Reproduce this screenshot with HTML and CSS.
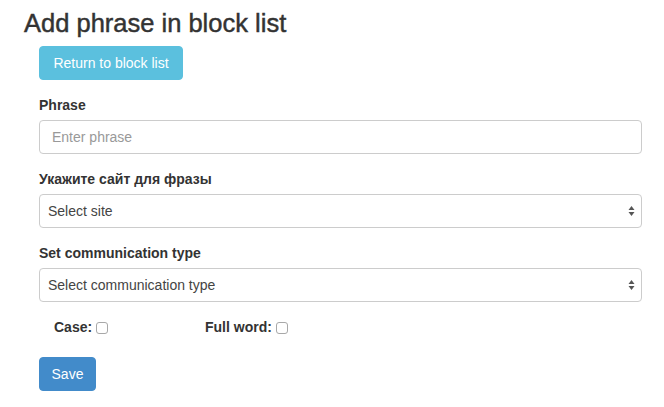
FILE: index.html
```html
<!DOCTYPE html>
<html>
<head>
<meta charset="utf-8">
<link rel="stylesheet" href="styles.css">
</head>
<body>
<div class="page">
  <h3 class="title">Add phrase in block list</h3>
  <form class="form">
    <div class="form-group">
      <button type="button" class="btn btn-info">Return to block list</button>
    </div>
    <div class="form-group">
      <label class="label">Phrase</label>
      <input class="control" type="text" placeholder="Enter phrase">
    </div>
    <div class="form-group">
      <label class="label">Укажите сайт для фразы</label>
      <div class="select-wrap">
        <select class="control select"><option>Select site</option></select>
      </div>
    </div>
    <div class="form-group">
      <label class="label">Set communication type</label>
      <div class="select-wrap">
        <select class="control select"><option>Select communication type</option></select>
      </div>
    </div>
    <div class="checks">
      <label class="check check-case">Case: <input type="checkbox" class="box"></label>
      <label class="check">Full word: <input type="checkbox" class="box"></label>
    </div>
    <button type="button" class="btn btn-primary">Save</button>
  </form>
</div>
</body>
</html>
```
FILE: styles.css
```css
* { box-sizing: border-box; }
html, body { margin: 0; padding: 0; background: #fff; }
body {
  font-family: "Liberation Sans", Arial, sans-serif;
  font-size: 14px;
  line-height: 20px;
  color: #333;
}
.page { padding: 0 22px 0 24px; }
.title {
  font-size: 25.5px;
  font-weight: 500;
  line-height: 28px;
  margin: 9px 0 9px 0;
  -webkit-text-stroke: 0.45px #333;
}
.form { padding-left: 15px; }
.form-group { margin-bottom: 15px; }
.label {
  display: block;
  font-weight: bold;
  margin-bottom: 5px;
}
.btn {
  display: inline-block;
  font-family: inherit;
  font-size: 14px;
  line-height: 20px;
  padding: 6px 12px;
  border-radius: 4px;
  border: 1px solid transparent;
  color: #fff;
  cursor: pointer;
}
.btn-info { background: #5bc0de; border-color: #5bc0de; width: 144px; }
.btn-primary { background: #428bca; border-color: #428bca; width: 57px; padding: 6px 0; text-align: center; }
.control {
  display: block;
  width: 100%;
  height: 34px;
  padding: 6px 12px;
  font-family: inherit;
  font-size: 14px;
  line-height: 20px;
  color: #555;
  background: #fff;
  border: 1px solid #ccc;
  border-radius: 4px;
  outline: none;
}
.control::placeholder { color: #999; }
.select {
  -webkit-appearance: none;
  appearance: none;
  padding-left: 8px;
  color: #444;
  background-image: url("data:image/svg+xml;utf8,<svg xmlns='http://www.w3.org/2000/svg' width='7' height='12' viewBox='0 0 7 12'><path d='M3.5 1 L6.5 5 L0.5 5 Z' fill='%23555'/><path d='M3.5 11 L6.5 7 L0.5 7 Z' fill='%23555'/></svg>");
  background-repeat: no-repeat;
  background-position: right 6px center;
  background-size: 7px 12px;
}
.checks {
  display: flex;
  height: 20px;
  margin-bottom: 20px;
  padding-left: 15px;
}
.check {
  display: flex;
  align-items: center;
  font-weight: bold;
  white-space: pre;
}
.check-case { width: 151px; }
.box {
  -webkit-appearance: none;
  appearance: none;
  width: 12px;
  height: 12px;
  margin: 1px 0 0 0;
  border: 1px solid #a8a8a8;
  border-radius: 3px;
  background: #fff;
}
```
